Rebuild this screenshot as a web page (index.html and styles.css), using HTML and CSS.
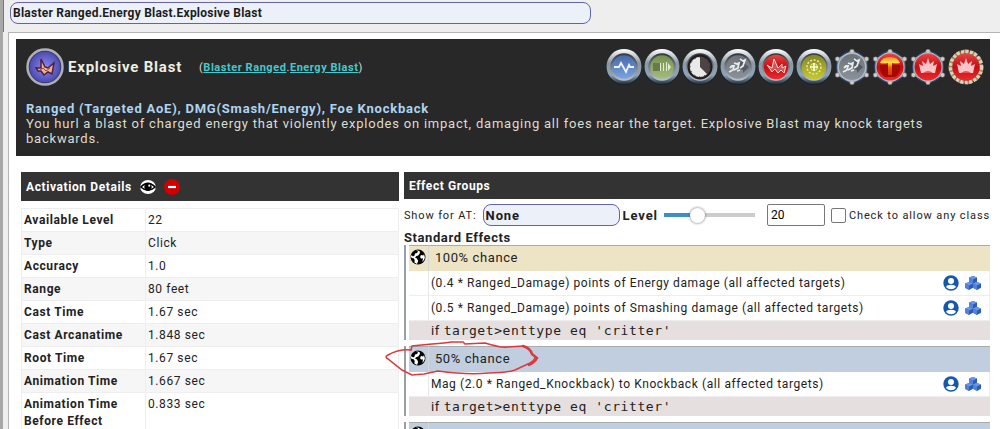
FILE: index.html
```html
<!DOCTYPE html>
<html lang="en">
  <head>
    <meta charset="UTF-8" />
    <meta name="viewport" content="width=device-width, initial-scale=1.0" />
    <title>Explosive Blast</title>
    <link rel="stylesheet" href="styles.css">
  </head>
  <body>
    <!-- Shared icon definitions -->
    <svg class="defs" width="0" height="0" aria-hidden="true">
      <defs>
        <linearGradient id="rim" x1="0" y1="0" x2="0" y2="1">
          <stop offset="0" stop-color="#ffffff" />
          <stop offset="0.4" stop-color="#8b98a3" />
          <stop offset="0.75" stop-color="#8fa3b3" />
          <stop offset="1" stop-color="#26323d" />
        </linearGradient>
        <linearGradient id="rim-in" x1="0" y1="0" x2="0" y2="1">
          <stop offset="0" stop-color="#30363c" />
          <stop offset="1" stop-color="#b9c6d0" />
        </linearGradient>
        <radialGradient id="violet"><stop offset="0" stop-color="#8c8cec" /><stop offset="1" stop-color="#4a4ab2" /></radialGradient>
        <linearGradient id="blue" x1="0" y1="0" x2="0" y2="1"><stop offset="0" stop-color="#4668aa" /><stop offset="1" stop-color="#7aa4e4" /></linearGradient>
        <linearGradient id="green" x1="0" y1="0" x2="0" y2="1"><stop offset="0" stop-color="#75904e" /><stop offset="1" stop-color="#a5bd7c" /></linearGradient>
        <linearGradient id="grey" x1="0" y1="0" x2="0" y2="1"><stop offset="0" stop-color="#6d7278" /><stop offset="1" stop-color="#8b9299" /></linearGradient>
        <linearGradient id="red" x1="0" y1="0" x2="0" y2="1"><stop offset="0" stop-color="#e64545" /><stop offset="0.5" stop-color="#c40d12" /><stop offset="1" stop-color="#f02a2c" /></linearGradient>
        <linearGradient id="olive" x1="0" y1="0" x2="0" y2="1"><stop offset="0" stop-color="#82842a" /><stop offset="1" stop-color="#c6ca2c" /></linearGradient>
        <linearGradient id="fire" x1="0" y1="0" x2="0" y2="1"><stop offset="0" stop-color="#ff8a1a" /><stop offset="0.3" stop-color="#ffdf4a" /><stop offset="0.6" stop-color="#ee5a10" /><stop offset="1" stop-color="#d8330c" /></linearGradient>
        <symbol id="ring" viewBox="0 0 36 36">
          <circle cx="18" cy="18" r="18" fill="#16222d" />
          <circle cx="18" cy="17.5" r="17.5" fill="url(#rim)" />
          <circle cx="18" cy="18" r="13.8" fill="url(#rim-in)" />
        </symbol>
        <symbol id="hex" viewBox="0 0 36 36">
          <circle cx="18" cy="18" r="16" fill="#2a4a78" />
          <path d="M18 2 32 10V26L18 34 4 26V10Z" fill="#4c5f78" stroke="#a4a8ac" />
          <g fill="#c9ccd0" stroke="#70665c" stroke-width=".5">
            <circle cx="18" cy="2.500" r="2.300" /><circle cx="32.500" cy="10" r="2.300" /><circle cx="32.500" cy="26" r="2.300" />
            <circle cx="18" cy="33.500" r="2.300" /><circle cx="3.500" cy="26" r="2.300" /><circle cx="3.500" cy="10" r="2.300" />
          </g>
          <circle cx="18" cy="18" r="14.5" fill="#b4bac0" />
        </symbol>
        <symbol id="runner" viewBox="0 0 36 36">
          <path d="M19 11l4-2v4l6 5-6 6v-3l-5-2z" fill="#555b61" />
          <path d="M9 23l4-2 1-4-2 0-2 2M14 21l4-2 1-5-2 1-3-1M20 19l3-2 2-6-2 1-3-2M17 22l3-1" fill="none" stroke="#e9ecee" stroke-width="1.800" />
        </symbol>
        <symbol id="crown" viewBox="0 0 36 36">
          <path d="M9 15l4 2-1-5 4 3 2-6 2 6 4-3-1 5 4-2-2 9H11z" fill="#ffc4c8" />
          <path d="M13 24q5-4 10 0z" fill="#e2545a" />
        </symbol>
        <symbol id="globe" viewBox="0 0 16 16">
          <circle cx="8" cy="8" r="7.500" fill="#000" />
          <path d="M6 1.300l2 1.200-1 1.500-2 .5-.5 2L3 7.500 1.500 6 .6 8l1.500 1 1.600.3 1 1.700-.3 2.500L7 15l1.200-3L7 9.500l-2-1L6.500 7l1.700-.5L10 4l-.5-2zM11 3l3 2-.7 1.500L11 6l-1 2 1 1.500h2L12.500 12l-1 1.500L14 11l.9-2.500L14 5z" fill="#fff" />
        </symbol>
        <symbol id="person" viewBox="0 0 16 16">
          <circle cx="8" cy="8" r="7.700" fill="#1558ad" />
          <circle cx="8" cy="6" r="3" fill="#fff" />
          <path d="M3 12q.8-2.200 5-2.200t5 2.200Q11 14.300 8 14.300T3 12z" fill="#fff" />
        </symbol>
        <symbol id="cube" viewBox="0 0 8 8">
          <path d="M4 0l4 1.600v4.200L4 8 0 5.800V1.600z" fill="#2a5cb8" />
          <path d="M4 0l4 1.600-4 1.800L0 1.600z" fill="#6e98e6" />
          <path d="M0 1.600l4 1.800V8L0 5.800z" fill="#5482da" />
        </symbol>
        <symbol id="cubes" viewBox="0 0 16 16">
          <use href="#cube" x="4" y="1" width="8" height="8" />
          <use href="#cube" x="0" y="7" width="8" height="8" />
          <use href="#cube" x="8" y="7" width="8" height="8" />
        </symbol>
      </defs>
    </svg>

    <header class="search">
      <input type="text" class="picker" value="Blaster Ranged.Energy Blast.Explosive Blast" aria-label="Power" />
    </header>

    <main class="panel">
      <section class="power">
        <div class="power-head">
          <svg class="power-icon" viewBox="0 0 38 38">
            <circle cx="19" cy="19" r="17.500" fill="#34345f" stroke="#aeb0b6" stroke-width="2.500" />
            <circle cx="19" cy="19" r="15.500" fill="url(#violet)" />
            <path d="M10 20l5 0 0-9 4 8 3 1 6-5-2 11-4-2-4 3-3-4-3 0z" fill="#edb293" stroke="#4e1f3d" stroke-width="1.500" />
            <path d="M14 22l3-2 3 3 4-3" fill="none" stroke="#9b4a3d" />
          </svg>
          <h1>Explosive Blast</h1>
          <div class="path">(<a href="#set">Blaster Ranged</a>.<a href="#power">Energy Blast</a>)</div>
          <div class="badges">
            <svg viewBox="0 0 36 36">
              <use href="#ring" /><circle cx="18" cy="18" r="11.800" fill="url(#blue)" />
              <path d="M8 18h5l2-4 5 9 3-7 1 2h4" fill="none" stroke="#eef4ff" stroke-width="1.800" />
            </svg>
            <svg viewBox="0 0 36 36">
              <use href="#ring" /><circle cx="18" cy="18" r="11.800" fill="url(#green)" />
              <path d="M9 14h7v8H9z" fill="#667b49" /><path d="M16 14h1v8h-1zM19 14h1v8h-1zM22 13h1v9h-1zM24 14l3 4-3 4z" fill="#e5ecd4" />
            </svg>
            <svg viewBox="0 0 36 36">
              <use href="#ring" /><circle cx="18" cy="18" r="12.500" fill="#241b1c" /><circle cx="18" cy="18" r="10.500" fill="#4c4344" />
              <path d="M18 18V8a10 10 0 1 0 7 17z" fill="#e9e9e9" />
              <circle cx="18" cy="18" r="9.700" fill="none" stroke="#332b2c" stroke-dasharray="1 4" />
            </svg>
            <svg viewBox="0 0 36 36">
              <use href="#ring" /><circle cx="18" cy="18" r="11.800" fill="url(#grey)" /><use href="#runner" />
            </svg>
            <svg viewBox="0 0 36 36">
              <use href="#ring" /><circle cx="18" cy="18" r="12.200" fill="url(#red)" />
              <path d="M9 16l5 3 2-9 4 9 4-4v4l4-2-2 7-3-3-3 3-3-4-3 3-2-3z" fill="#c9585c" stroke="#ffdcd8" />
            </svg>
            <svg viewBox="0 0 36 36">
              <use href="#ring" /><circle cx="18" cy="18" r="12.200" fill="url(#olive)" />
              <circle cx="18" cy="18" r="7" fill="none" stroke="#e8eb9a" stroke-width="1.500" stroke-dasharray="2 1.600" />
              <circle cx="18" cy="18" r="3.500" fill="none" stroke="#e8eb9a" /><path d="M18 14v8M14 18h8" stroke="#fdffd6" stroke-width="1.700" />
            </svg>
            <svg viewBox="0 0 36 36">
              <use href="#hex" /><circle cx="18" cy="18" r="13" fill="url(#grey)" /><use href="#runner" />
            </svg>
            <svg viewBox="0 0 36 36">
              <use href="#hex" /><circle cx="18" cy="18" r="13.500" fill="url(#red)" />
              <path d="M8 16h20q1 8-5 12H13q-6-4-5-12z" fill="#a30a04" />
              <path d="M8 14q2-6 10-6t10 6q-4 1-8 0v12h-4V14q-4 1-8 0z" fill="url(#fire)" />
            </svg>
            <svg viewBox="0 0 36 36">
              <use href="#hex" /><circle cx="18" cy="18" r="13.500" fill="url(#red)" /><use href="#crown" />
            </svg>
            <svg viewBox="0 0 36 36">
              <circle cx="18" cy="18" r="16" fill="#8a6844" stroke="#b98548" stroke-width="3" stroke-dasharray="6 3" />
              <circle cx="18" cy="18" r="15.500" fill="none" stroke="#d5d0c8" stroke-width="3.500" stroke-dasharray="3 1.500" />
              <circle cx="18" cy="18" r="13.500" fill="url(#red)" /><use href="#crown" />
            </svg>
          </div>
        </div>
        <p class="summary">Ranged (Targeted AoE), DMG(Smash/Energy), Foe Knockback</p>
        <p>You hurl a blast of charged energy that violently explodes on impact, damaging all foes near the target. Explosive Blast may knock targets backwards.</p>
      </section>

      <div class="columns">
        <section class="activation">
          <h2 class="bar">
            Activation Details
            <button type="button" aria-label="Show">
              <svg viewBox="0 0 16 16">
                <ellipse cx="8" cy="8" rx="7.800" ry="7" fill="#fff" />
                <path d="M.8 8q7-7.500 14.400 0Q8 14.500.8 8z" fill="#fff" stroke="#000" stroke-width="1.500" />
                <circle cx="8" cy="8" r="3.700" fill="#000" /><circle cx="9.300" cy="6.700" r="1.100" fill="#fff" />
              </svg>
            </button>
            <button type="button" aria-label="Hide">
              <svg viewBox="0 0 16 16"><circle cx="8" cy="8" r="8" fill="#d00000" /><path d="M4 8h8" stroke="#fff" stroke-width="2.200" /></svg>
            </button>
          </h2>
          <table class="details">
            <tr><th>Available Level</th><td>22</td></tr>
            <tr><th>Type</th><td>Click</td></tr>
            <tr><th>Accuracy</th><td>1.0</td></tr>
            <tr><th>Range</th><td>80 feet</td></tr>
            <tr><th>Cast Time</th><td>1.67 sec</td></tr>
            <tr><th>Cast Arcanatime</th><td>1.848 sec</td></tr>
            <tr><th>Root Time</th><td>1.67 sec</td></tr>
            <tr><th>Animation Time</th><td>1.667 sec</td></tr>
            <tr><th>Animation Time Before Effect</th><td>0.833 sec</td></tr>
          </table>
        </section>

        <section class="effects">
          <h2 class="bar">Effect Groups</h2>
          <div class="filters">
            <label for="at">Show for AT:</label>
            <select id="at" class="picker"><option>None</option></select>
            <label for="level" class="level-label">Level</label>
            <input type="range" id="level" min="1" max="50" value="18" />
            <input type="text" id="level-value" value="20" aria-label="Level value" />
            <input type="checkbox" id="any-class" />
            <label for="any-class">Check to allow any class</label>
          </div>
          <h3>Standard Effects</h3>

          <table class="group">
            <tr class="chance always">
              <td><svg class="globe"><use href="#globe" /></svg></td>
              <td colspan="2">100% chance</td>
            </tr>
            <tr class="effect">
              <td></td>
              <td>(0.4 * Ranged_Damage) points of Energy damage (all affected targets)</td>
              <td class="marks"><svg><use href="#person" /></svg><svg><use href="#cubes" /></svg></td>
            </tr>
            <tr class="effect">
              <td></td>
              <td>(0.5 * Ranged_Damage) points of Smashing damage (all affected targets)</td>
              <td class="marks"><svg><use href="#person" /></svg><svg><use href="#cubes" /></svg></td>
            </tr>
            <tr class="condition">
              <td></td>
              <td colspan="2">if <code>target&gt;enttype eq 'critter'</code></td>
            </tr>
          </table>

          <div class="marked">
            <table class="group">
              <tr class="chance">
                <td><svg class="globe"><use href="#globe" /></svg></td>
                <td colspan="2">50% chance</td>
              </tr>
              <tr class="effect">
                <td></td>
                <td>Mag (2.0 * Ranged_Knockback) to Knockback (all affected targets)</td>
                <td class="marks"><svg><use href="#person" /></svg><svg><use href="#cubes" /></svg></td>
              </tr>
              <tr class="condition">
                <td></td>
                <td colspan="2">if <code>target&gt;enttype eq 'critter'</code></td>
              </tr>
            </table>
            <!-- Hand-drawn loop around the 50% chance row -->
            <svg class="scribble" viewBox="0 0 154 38" fill="none" stroke="#d93a3e" stroke-linecap="round">
              <path d="M26 9Q14 8 3 14q-4 2 0 4l14 11 10 5 12-1 14-3q30 4 50 2 18 0 27-3l15-7q5-3 5-6" stroke-width="1.500" />
              <path d="M26 9l1-4 20-2q14-1 19-2h12l2 2 20-1q16 5 22 4l16-1" stroke-width="1.500" />
              <path d="M138 5q7 2 9 8l5 4q-2 4-8 7" stroke-width="2.500" />
            </svg>
          </div>

          <!-- Next group, only its header is in view -->
          <table class="group">
            <tr class="chance">
              <td><svg class="globe"><use href="#globe" /></svg></td>
              <td colspan="2"></td>
            </tr>
          </table>
        </section>
      </div>
    </main>
  </body>
</html>
```

FILE: styles.css
```css
html {
  height: 100%;
  overflow: hidden;
}
body {
  margin: 0;
  min-height: 100vh;
  box-sizing: border-box;
  border-left: 3px solid #a8a8a8;
  background-color: #eeeeee;
  color: #222222;
  font-family: Roboto, sans-serif;
  font-size: 12px;
  letter-spacing: 0.05em;
}
h1,
h2,
h3,
p {
  margin: 0;
}
table {
  width: 100%;
  border-collapse: collapse;
}
th,
td {
  padding: 0;
  text-align: left;
}
.defs {
  position: absolute;
}
.search {
  border-left: 1px solid #777777;
  padding: 2px 6px 8px;
}
.picker {
  box-sizing: border-box;
  height: 22px;
  border: 1px solid #6363a5;
  border-radius: 8px;
  background-color: #ebf0f9;
  color: #1c1c1c;
  font-family: inherit;
  font-size: 13px;
  font-weight: bold;
  appearance: none;
}
.search .picker {
  display: block;
  width: 59%;
  padding: 0 2px;
  font-size: 12px;
  letter-spacing: 0.02em;
}
.panel {
  margin-left: 5px;
  border-top: 1px solid #b4b4b4;
  border-left: 1px solid #b4b4b4;
  padding: 6px 10px 0 7px;
  background-color: #ffffff;
}

/* Power header */
.power {
  padding: 9px 6px 10px 10px;
  background-color: #282828;
  color: #dcdcd0;
  font-size: 13px;
  letter-spacing: 0.06em;
  line-height: 15px;
}
.power-head {
  display: flex;
  align-items: center;
  height: 38px;
  margin-bottom: 15px;
}
.power-icon {
  width: 38px;
  height: 38px;
  margin-right: 4px;
}
h1 {
  color: #eeeee2;
  font-size: 15px;
}
.path {
  margin-left: 17px;
  font-size: 11px;
  letter-spacing: 0.05em;
}
.path a {
  color: #46c8cc;
  font-weight: bold;
}
.badges {
  display: flex;
  gap: 2px;
  margin-left: auto;
}
.badges svg {
  width: 36px;
  height: 36px;
}
.summary {
  color: #add4f0;
  font-weight: bold;
}

/* Two columns */
.columns {
  display: flex;
  gap: 5px;
  margin-top: 16px;
  padding-left: 5px;
}
.activation {
  flex: 0 0 39%;
}
.effects {
  flex: 1;
  min-width: 0;
}
.bar {
  display: flex;
  align-items: center;
  height: 27px;
  padding: 0 5px;
  background-color: #333333;
  color: #ffffff;
  font-size: 12px;
}
.activation .bar {
  height: 29px;
}
.bar button {
  width: 16px;
  height: 16px;
  margin-left: 8px;
  border: 0;
  padding: 0;
  background: none;
}
.bar svg {
  display: block;
}
.details {
  margin-top: 7px;
}
.details th,
.details td {
  border: 1px solid #eeeeee;
  padding: 3px 2px 2px;
  line-height: 17px;
  vertical-align: top;
}
.details th {
  width: 119px;
}
.details tr:nth-child(even) {
  background-color: #f6f6f6;
}

/* Filters */
.filters {
  display: flex;
  align-items: center;
  height: 32px;
  font-size: 11px;
  letter-spacing: 0.08em;
  white-space: nowrap;
}
#at {
  width: 137px;
  margin: 0 3px 0 6px;
  padding: 0 2px;
  letter-spacing: inherit;
}
.level-label {
  font-size: 13px;
  font-weight: bold;
}
#level {
  flex: 1;
  width: 0;
  min-width: 0;
  height: 16px;
  margin: 0 12px 0 6px;
  background: linear-gradient(#3c8fc7, #3c8fc7) left / 36% 4px no-repeat,
    linear-gradient(#cccccc, #cccccc) center / 100% 4px no-repeat;
  appearance: none;
}
#level::-webkit-slider-thumb {
  width: 15px;
  height: 15px;
  border: 0;
  border-radius: 50%;
  background-color: #ffffff;
  box-shadow: 0 0 3px #666666;
  appearance: none;
}
#level-value {
  box-sizing: border-box;
  width: 58px;
  height: 22px;
  border: 1px solid #777777;
  border-radius: 2px;
  padding: 0 3px;
  font-family: inherit;
  font-size: 12px;
}
#any-class {
  width: 15px;
  height: 15px;
  box-sizing: border-box;
  margin: 0 3px 0 6px;
  border: 1px solid #777777;
  border-radius: 2px;
  appearance: none;
}
h3 {
  font-size: 13px;
  line-height: 14px;
}

/* Effect groups */
.group {
  border-left: 2px solid #9a9fa6;
  border-collapse: separate;
  border-spacing: 0;
  margin-bottom: 6px;
  padding-left: 3px;
}
.group td:first-child {
  min-width: 19px;
  padding: 0;
  border-right: 1px solid #e8e8e8;
}
.group td:nth-child(2) {
  width: 100%;
}
.group svg {
  display: block;
  width: 16px;
  height: 16px;
}
.chance td {
  height: 22px;
  border-top: 1px solid #a9abad;
  padding: 0 0 3px 6px;
  background-color: #c0cee0;
  font-size: 13px;
}
.always td {
  background-color: #ede4c5;
}
.group .chance td:first-child {
  min-width: 18px;
  padding: 0 0 3px 1px;
  border-right-color: #d5d8d8;
}
.effect td {
  height: 24px;
  border-bottom: 1px solid #eeeeee;
  padding-left: 2px;
}
.effect .marks {
  display: flex;
  align-items: center;
  justify-content: flex-end;
  gap: 6px;
  padding-right: 8px;
  border-right: 1px solid #eeeeee;
}
.condition td {
  height: 19px;
  padding-left: 2px;
  background-color: #e6dfe0;
  font-size: 13px;
}
.group .condition td:first-child {
  border-right-color: #e6dfe0;
}
code {
  font-family: "DejaVu Sans Mono", monospace;
  font-size: 13px;
}
.marked {
  position: relative;
}
.marked .scribble {
  position: absolute;
  top: -5px;
  left: -19px;
  width: 154px;
  height: 38px;
}
```
